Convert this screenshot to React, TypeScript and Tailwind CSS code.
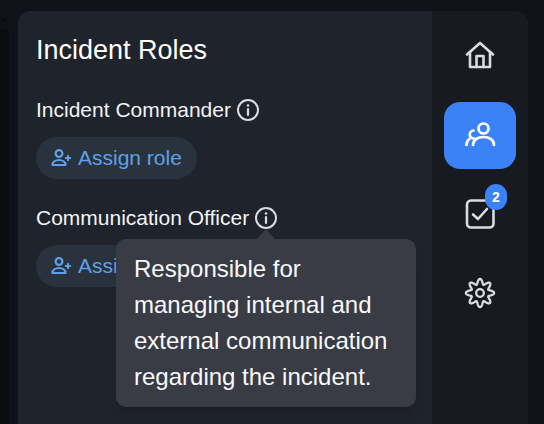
import React from "react";

const Info = () => (
  <svg width="24" height="24" viewBox="0 0 24 24" fill="none" stroke="currentColor" className="shrink-0 text-[#d9dce1]">
    <circle cx="12" cy="12" r="10" strokeWidth="2" />
    <path d="M12 11v6" strokeWidth="2.2" strokeLinecap="round" />
    <circle cx="12" cy="7.5" r="1.3" fill="currentColor" stroke="none" />
  </svg>
);

const UserPlus = () => (
  <svg width="20" height="20" viewBox="0 0 20 20" fill="none" stroke="currentColor" strokeWidth="2.2" strokeLinecap="round" strokeLinejoin="round" className="shrink-0">
    <circle cx="8" cy="5.500" r="3.400" />
    <path d="M1.500 17c0-3 3-5 6.500-5s6.500 2 6.500 5z" />
    <path d="M17 7.800v4.400M14.800 10h4.400" strokeWidth="2" />
  </svg>
);

const gearPath = (() => {
  const pts: string[] = [];
  for (let i = 0; i < 240; i++) {
    const t = (i / 240) * Math.PI * 2;
    const r = 11.5 + 2.6 * Math.cos(8 * t);
    pts.push(`${(16 + r * Math.sin(t)).toFixed(2)} ${(16 - r * Math.cos(t)).toFixed(2)}`);
  }
  return "M" + pts.join("L") + "Z";
})();

const Role = ({ label }: { label: string }) => (
  <div className="flex flex-col items-start gap-[12px]">
    <div className="flex h-[30px] items-center gap-[5px] text-[21px] text-[#f3f4f6]">
      <span>{label}</span>
      <Info />
    </div>
    <button className="flex h-[42px] items-center gap-[7px] rounded-[21px] bg-[#29323d] px-[15px] text-[21px] text-[#5fa0ea]">
      <UserPlus />
      Assign role
    </button>
  </div>
);

export default function App() {
  return (
    <div className="relative h-[424px] w-[544px] overflow-hidden bg-[#0f1218] pl-[18px] pr-[16px] pt-[11px] font-['Liberation_Sans',sans-serif]">
      <span className="absolute left-0 top-[17px] h-0 w-0 border-x-[4px] border-b-[5px] border-x-transparent border-b-[#0a0c10]" />
      <span className="absolute bottom-0 left-0 top-[29px] w-[9px] bg-[#0a0c10]" />
      <div className="relative flex h-[413px] overflow-hidden rounded-t-[12px]">
        <main className="flex w-[414px] flex-col bg-[#1f232b] pl-[18px] pt-[19px]">
          <h1 className="text-[27px] leading-[40px] text-white">Incident Roles</h1>
          <div className="mt-[25px] flex flex-col gap-[24px]">
            <Role label="Incident Commander" />
            <Role label="Communication Officer" />
          </div>
        </main>
        <aside className="flex flex-1 flex-col items-center bg-[#171a21] pt-[26px] text-[#d9dce1]">
          <div className="flex h-[36px] items-center justify-center">
            <svg width="32" height="32" viewBox="0 0 32 32" fill="none" stroke="currentColor" strokeWidth="2.600" strokeLinejoin="round" strokeLinecap="round">
              <path d="M3 15.500 16 4 29 15.500" />
              <path d="M6 13v15h20V13" />
              <path d="M12.500 28V17h7v11" />
            </svg>
          </div>
          <div className="mt-[29px] flex h-[67px] w-[72px] items-center justify-center rounded-[16px] bg-[#3b82f6] text-white">
            <svg width="32" height="32" viewBox="0 0 32 32" fill="none" stroke="currentColor" strokeWidth="2.700" strokeLinecap="round">
              <circle cx="19.500" cy="8.500" r="5" />
              <path d="M9 25c0-5 4.500-8 10.500-8S30 20 30 25" />
              <path d="M9.500 10.500a4 4 0 0 0 .5 8" />
              <path d="M2.500 25c0-2.500.800-4.500 2.800-6" />
            </svg>
          </div>
          <div className="relative mt-[29px] flex h-[32px] w-[32px] items-center justify-center">
            <svg width="32" height="32" viewBox="0 0 32 32" fill="none" stroke="currentColor" strokeWidth="2.600" strokeLinecap="round" strokeLinejoin="round">
              <rect x="3" y="2.500" width="26.500" height="27" rx="4" />
              <path d="M9 16.500 14 21l9-10" />
            </svg>
            <span className="absolute left-[21px] top-[-14px] flex h-[26px] w-[22px] items-center justify-center rounded-full bg-[#3b82f6] text-[14px] font-bold text-white">2</span>
          </div>
          <div className="mt-[47px] flex h-[32px] w-[32px] items-center justify-center">
            <svg width="32" height="32" viewBox="0 0 32 32" fill="none" stroke="currentColor" strokeWidth="2.300" strokeLinejoin="round" className="shrink-0">
              <path d={gearPath} />
              <circle cx="16" cy="16" r="3.800" />
            </svg>
          </div>
        </aside>
        <div className="absolute left-[98px] top-[228px] w-[300px] rounded-[10px] bg-[#393c45] px-[18px] py-[12px] text-[24px] leading-[36px] text-[#f9fafb] shadow-lg">
          <span className="absolute left-[141px] top-[-10px] h-0 w-0 border-x-[9px] border-b-[10px] border-x-transparent border-b-[#393c45]" />
          Responsible for managing internal and external communication regarding the incident.
        </div>
      </div>
    </div>
  );
}
